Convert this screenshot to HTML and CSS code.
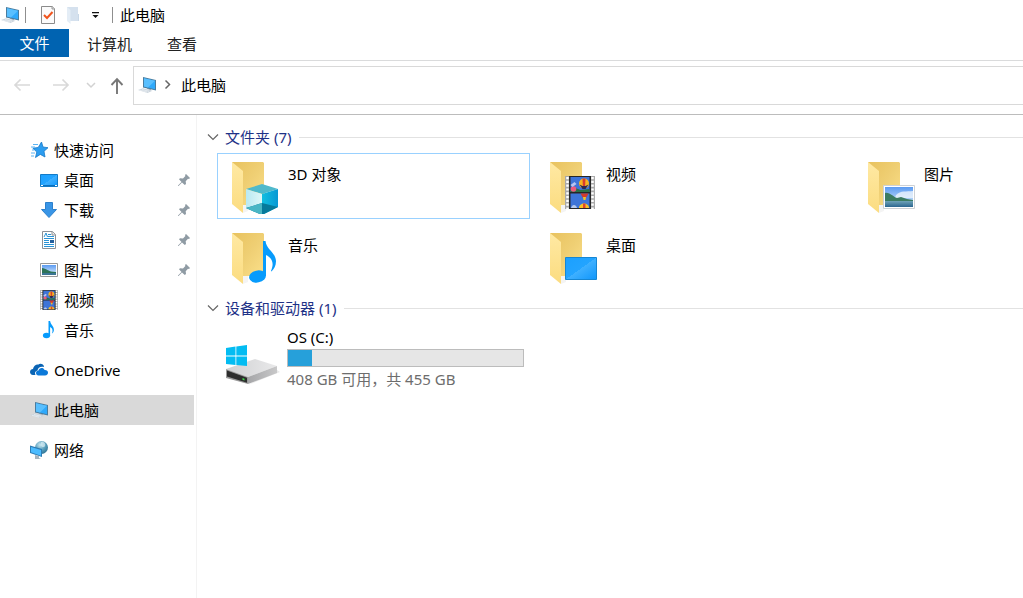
FILE: index.html
```html
<!DOCTYPE html>
<html lang="zh-CN">
<head>
<meta charset="utf-8">
<meta name="viewport" content="width=device-width, initial-scale=1">
<title>此电脑</title>
<link rel="stylesheet" href="styles.css">
</head>
<body>
<svg class="defs" aria-hidden="true">
  <defs>
    <linearGradient id="g-back" x1="0" y1="0" x2="1" y2="1"><stop offset="0" stop-color="#e8c25e"/><stop offset=".5" stop-color="#efcf74"/><stop offset="1" stop-color="#fbe08a"/></linearGradient>
    <linearGradient id="g-flap" x1="0" y1="0" x2="0" y2="1"><stop offset="0" stop-color="#ffe9a3"/><stop offset="1" stop-color="#fbdc80"/></linearGradient>
    <linearGradient id="g-blue" x1="0" y1="0" x2="1" y2="1"><stop offset="0" stop-color="#1ba0ff"/><stop offset=".5" stop-color="#23a4ff"/><stop offset=".5" stop-color="#3fb0ff"/><stop offset="1" stop-color="#0f96fb"/></linearGradient>
    <linearGradient id="g-sky" x1="0" y1="0" x2="0" y2="1"><stop offset="0" stop-color="#5b9bf2"/><stop offset="1" stop-color="#e6f3fd"/></linearGradient>
    <linearGradient id="g-sea" x1="0" y1="0" x2="0" y2="1"><stop offset="0" stop-color="#6fa3b8"/><stop offset="1" stop-color="#2b6690"/></linearGradient>
    <linearGradient id="g-cl"><stop offset="0" stop-color="#b9e9f2"/><stop offset="1" stop-color="#dff7f8"/></linearGradient>
    <linearGradient id="g-cr"><stop offset="0" stop-color="#12bfe0"/><stop offset="1" stop-color="#0798d4"/></linearGradient>
    <linearGradient id="g-top"><stop offset="0" stop-color="#cfd0d2"/><stop offset="1" stop-color="#e9e9ea"/></linearGradient>
    <linearGradient id="g-side"><stop offset="0" stop-color="#a5a6a8"/><stop offset="1" stop-color="#c8c8c9"/></linearGradient>
    <radialGradient id="g-globe" cx=".4" cy=".3" r=".8"><stop offset="0" stop-color="#c9e7f0"/><stop offset=".5" stop-color="#5ba0bd"/><stop offset="1" stop-color="#246a8c"/></radialGradient>
    <symbol id="i-folder" viewBox="0 0 56 56">
      <path d="M18 55l5-2v-6h-5z" fill="#f4f4f4"/>
      <path d="M7 4h31l1 1v42H18z" fill="url(#g-back)"/>
      <path d="M7 4l11 9v42L7 46z" fill="url(#g-flap)"/>
    </symbol>
    <symbol id="i-pc" viewBox="0 0 20 20">
      <path d="M10 12l4 1.500v2L10 14z" fill="#a9b6c0"/>
      <path d="M6 2l13 3v10.500L6 12.500z" fill="#4a7c9e"/>
      <path d="M7 3.200l11 2.600v8.400L7 11.500z" fill="#2fa9fb"/>
      <path d="M7 3.200l11 2.600-7 6.700-4-1z" fill="#59bffe"/>
      <path d="M1 15l5-1.800 9.500 2.500L10.500 18z" fill="#ccd5dd"/>
      <path d="M3 15.300l7 1.800M5 14.500l7 1.800" stroke="#f4f7fa" stroke-width=".6"/>
    </symbol>
    <symbol id="i-film" viewBox="0 0 30 33">
      <path d="M0 0h30v33H0z" fill="#a9a9a9"/>
      <path d="M4 0h22v33H4z" fill="#262626"/>
      <path d="M2.500 1v32M27.500 1v32" stroke="#fff" stroke-width="2.500" stroke-dasharray="2.200 1.600"/>
      <path d="M5.500 1h19v15h-19zM5.500 17.500h19V32h-19z" fill="#3e74d8"/>
      <path d="M5.500 13l5-1 5 2 9-1v3h-19z" fill="#2b7045"/>
      <circle cx="8.500" cy="13" r="2.800" fill="#ec5a7c"/><path d="M5.500 9l4-3 2 2-4 3z" fill="#b6c5f2"/>
      <ellipse cx="19" cy="7.500" rx="5" ry="5" fill="#f7b321"/><path d="M17.500 2.500h3l-.5 10h-2z" fill="#d83e2e"/><path d="M14.500 8.500l3 1.500h3l3-1.500-3 4.500h-3z" fill="#2d2952"/>
      <path d="M15.500 17.500h8l-2.500 4.500h-3z" fill="#d33b2c"/><path d="M18 21h3l-.5 3h-2z" fill="#f3c02b"/>
      <path d="M14 32c0-6 10-6 10 0z" fill="#f9c123"/><path d="M18 27.500h2.500V32H18z" fill="#de4431"/>
      <path d="M6 32c1-4 5-4 6 0z" fill="#b7c9ec"/>
    </symbol>
    <symbol id="i-photo" viewBox="0 0 32 24">
      <path d="M.5.5h31v23H.5z" fill="#fff" stroke="#cdd1d5"/>
      <path d="M2 2h28v20H2z" fill="url(#g-sky)"/>
      <path d="M13 10c5-5 10-3 17-4v7H12z" fill="#f3f8fc" opacity=".75"/>
      <path d="M2 8c5-1 8 4 12 5l4-1 6 2 6 1v2H2z" fill="#3b7c62"/>
      <path d="M2 16h28v6H2z" fill="url(#g-sea)"/>
    </symbol>
    <symbol id="i-pin" viewBox="0 0 14 14">
      <path d="M9 1l4 4-1 1-1-.3-2.300 2.500.3 2.800-1.200 1L5 9.500 1.500 13H1v-.5L4.500 9 2 6.300l1-1.100 3 .2L8.400 3 8 2z" fill="#8f9ba4"/>
    </symbol>
    <symbol id="i-down" viewBox="0 0 12 8"><path d="M1 1.500l5 5 5-5" fill="none" stroke="currentColor" stroke-width="1.200"/></symbol>
  </defs>
</svg>

<header>
  <div class="titlebar">
    <svg class="icon20" viewBox="0 0 20 20"><use href="#i-pc"/></svg>
    <span class="sep"></span>
    <button class="quick quick-check" aria-label="属性"><svg width="16" height="20" viewBox="0 0 16 20"><path d="M1.500 1.500h11l2 2v15h-13z" fill="#fbfbfb" stroke="#8b8b8b"/><path d="M12 1v3h3" fill="#ddd" stroke="#999"/><path d="M4 10l3 3 5.500-6" fill="none" stroke="#f0541e" stroke-width="2"/></svg></button>
    <button class="quick quick-folder" aria-label="新建文件夹"><svg width="14" height="20" viewBox="0 0 14 20"><path d="M1 2h11v14H4z" fill="#d5e1ee"/><path d="M12 9h1v7h-1z" fill="#c9d8e8"/><path d="M1 2l3.500 3v14L1 16z" fill="#e4edf6"/></svg></button>
    <button class="quick quick-menu" aria-label="自定义快速访问工具栏"><svg width="8" height="8" viewBox="0 0 8 8"><path d="M0 1h7v1.300H0zM.5 4h6l-3 3z" fill="#111"/></svg></button>
    <span class="sep"></span>
    <h1 class="title">此电脑</h1>
  </div>
  <div class="tabs">
    <button class="tab tab-file">文件</button>
    <button class="tab">计算机</button>
    <button class="tab">查看</button>
  </div>
  <div class="navbar">
    <button class="nav" aria-label="后退"><svg width="18" height="16" viewBox="0 0 18 16"><path d="M17 8H2M7.500 2.500L2 8l5.500 5.500" fill="none" stroke="#d9d9d9" stroke-width="1.700"/></svg></button>
    <button class="nav" aria-label="前进"><svg width="18" height="16" viewBox="0 0 18 16"><path d="M1 8h15M10.500 2.500L16 8l-5.500 5.500" fill="none" stroke="#d9d9d9" stroke-width="1.700"/></svg></button>
    <button class="nav nav-recent" aria-label="最近浏览的位置"><svg width="10" height="8" viewBox="0 0 10 8"><path d="M1 2l4 4 4-4" fill="none" stroke="#d2d2d2" stroke-width="1.500"/></svg></button>
    <button class="nav nav-up" aria-label="上移"><svg width="14" height="18" viewBox="0 0 14 18"><path d="M7 18V3M1.500 9L7 3.200 12.500 9" fill="none" stroke="#777" stroke-width="1.900"/></svg></button>
    <div class="address">
      <svg class="icon20" viewBox="0 0 20 20"><use href="#i-pc"/></svg>
      <svg class="crumb-arrow" width="8" height="12" viewBox="0 0 8 12"><path d="M1.500 1.500l4 4-4 4" fill="none" stroke="#666" stroke-width="1.500"/></svg>
      <button class="crumb">此电脑</button>
    </div>
  </div>
</header>

<div class="body">
  <nav class="sidebar">
    <a class="item" href="#quick"><svg class="icon20" viewBox="0 0 20 20"><path d="M12.500 2l1.500 5 5 .7-4 3.600 1 5.700-4.700-2.600L6.500 17.500l1.300-5.500-4-3.800 5.400-.7z" fill="#2c9df0" stroke="#1679c8" stroke-width=".8"/><path d="M4 4.500h5M2 7h4M3 10h2M2 13h4M2 16h3" stroke="#5ab4f4" stroke-width="1"/></svg>快速访问</a>
    <a class="item sub" href="#desktop"><svg class="icon20" viewBox="0 0 20 20"><path d="M1.500 4.500h17v12h-17z" fill="url(#g-blue)" stroke="#147bc7"/><path d="M2 15.500h2M16 15.500h2" stroke="#fff"/><path d="M4 15.500h12" stroke="#0a70bd"/></svg>桌面<svg class="pin"><use href="#i-pin"/></svg></a>
    <a class="item sub" href="#downloads"><svg class="icon20" viewBox="0 0 20 20"><path d="M6.500 2.500h7v7h4L10 17.500 2.500 9.500h4z" fill="#3995e6" stroke="#2c80cc"/></svg>下载<svg class="pin"><use href="#i-pin"/></svg></a>
    <a class="item sub" href="#documents"><svg class="icon20" viewBox="0 0 20 20"><path d="M3.500 1.500h10l3 3v14h-13z" fill="#fff" stroke="#8c9196"/><path d="M13 1.500v3.500h3.500" fill="#eee" stroke="#8c9196"/><path d="M5 7l2-4 1.500 4M9 4.500h3M9 6.500h6M5 8.500h10M5 10.500h5M5 12.500h5M5 14.500h10M5 16.500h10" fill="none" stroke="#2a93d5"/><path d="M11 10h4v3h-4z" fill="#245f9c"/></svg>文档<svg class="pin"><use href="#i-pin"/></svg></a>
    <a class="item sub" href="#pictures"><svg class="icon20" viewBox="0 0 20 20"><path d="M1.500 3.500h17v13h-17z" fill="#fff" stroke="#999"/><path d="M3 5h14v10H3z" fill="url(#g-sky)"/><path d="M3 8c4 0 6 4 14 4v2H3z" fill="#2d7358"/><path d="M3 13h14v2H3z" fill="#3c7595"/></svg>图片<svg class="pin"><use href="#i-pin"/></svg></a>
    <a class="item sub" href="#videos"><svg class="icon20" viewBox="0 0 20 20"><use href="#i-film" x="1" y="0" width="18" height="20"/></svg>视频</a>
    <a class="item sub" href="#music"><svg class="icon20" viewBox="0 0 20 20"><ellipse cx="7.500" cy="15.500" rx="3.600" ry="2.700" fill="#079bfc"/><path d="M9.500 1h1.600c.5 4 4 5 3.800 9-.1 2-1 3-2 3.500 1.500-3.500.2-5.500-1.800-6.500v9H9.500z" fill="#079bfc"/></svg>音乐</a>
    <a class="item root" href="#onedrive"><svg class="icon20" viewBox="0 0 20 20"><path d="M1 12c0-2 1.500-3 3-3 .5-3 3-5 5.500-4.500C11 3 15 4 15 7c-4-1-6 1-6.500 3.500C6 11 5.500 13 6.500 15H4c-2 0-3-1.500-3-3z" fill="#0a64b4"/><path d="M7 13c0-1.500 1-2.500 2.500-2.500C10 7.500 14.500 7 15.500 10c2-.2 3.500.8 3.500 2.600 0 1.600-1 2.900-3 2.900H9.500C8 15.500 7 14.500 7 13z" fill="#0c79d9"/></svg>OneDrive</a>
    <a class="item root selected" href="#pc" aria-current="page"><svg class="icon20" viewBox="0 0 20 20"><use href="#i-pc"/></svg>此电脑</a>
    <a class="item root" href="#network"><svg class="icon20" viewBox="0 0 20 20"><circle cx="12.500" cy="7.500" r="6.500" fill="url(#g-globe)"/><path d="M12 2c3-1 5 2 4 4s-4 1-4-1z" fill="#d5edf3" opacity=".7"/><path d="M1 5.500l12 3.500v8L1 13z" fill="#2d7db5"/><path d="M2 7l10 3v5.700L2 12.300z" fill="#4cbcff"/><path d="M6 15l4 1v2l2 1H6z" fill="#a7b4bd"/></svg>网络</a>
  </nav>

  <main class="content">
    <section class="group">
      <h2 class="group-title"><button class="group-toggle" aria-expanded="true"><svg class="chevron"><use href="#i-down"/></svg>文件夹 (7)</button></h2>
      <div class="tiles">
        <a class="tile focused" href="#3d"><svg class="icon56" viewBox="0 0 56 56"><use href="#i-folder"/><path d="M21 31l16-5 16 5-16 5z" fill="#4fb9cb"/><path d="M21 31l16 5v21l-16-7z" fill="url(#g-cl)"/><path d="M37 36l16-5v18l-16 8z" fill="url(#g-cr)"/><path d="M21 50l16-5 16 4-16 8z" fill="#067a9b"/><path d="M21 50l16-5v12z" fill="#49b6c5"/></svg><span class="name">3D 对象</span></a>
        <a class="tile" href="#videos"><svg class="icon56" viewBox="0 0 56 56"><use href="#i-folder"/><use href="#i-film" x="22" y="18" width="30" height="33"/></svg><span class="name">视频</span></a>
        <a class="tile" href="#pictures"><svg class="icon56" viewBox="0 0 56 56"><use href="#i-folder"/><use href="#i-photo" x="22" y="27" width="32" height="24"/></svg><span class="name">图片</span></a>
        <a class="tile" href="#music"><svg class="icon56" viewBox="0 0 56 56"><use href="#i-folder"/><ellipse cx="32.500" cy="47.500" rx="8.500" ry="6" transform="rotate(-12 32.500 47.500)" fill="#079bfc"/><path d="M38 12h2.500c1 9 10 11 10.500 20 .1 5-2 8-4.500 10.500l-.5-.5c3.500-8 1-13-5-16v21h-3z" fill="#079bfc"/></svg><span class="name">音乐</span></a>
        <a class="tile" href="#desktop"><svg class="icon56" viewBox="0 0 56 56"><use href="#i-folder"/><path d="M22.500 28.500h31v22h-31z" fill="url(#g-blue)" stroke="#1686d3"/></svg><span class="name">桌面</span></a>
      </div>
    </section>
    <section class="group">
      <h2 class="group-title"><button class="group-toggle" aria-expanded="true"><svg class="chevron"><use href="#i-down"/></svg>设备和驱动器 (1)</button></h2>
      <div class="tiles">
        <a class="tile tile-drive" href="#c"><svg class="icon56" viewBox="0 0 56 56"><path d="M23 55l32-13-3-2z" fill="#e9e9e9"/><path d="M1 39l29-10 22 7-29 11z" fill="url(#g-top)"/><path d="M23 47l29-11v7L23 54z" fill="url(#g-side)"/><path d="M1 39l22 8v7L1 48z" fill="#9a9a9a"/><path d="M2 40.500l20 7.200v5L2 46.500z" fill="#2d2d2d"/><path d="M17.500 48l2 .7v1.800l-2-.7z" fill="#3ee04c"/><path d="M1 18l9.500-1.400v9H1zM11.300 16.500L22 15v10.600H11.300zM1 26.400h9.500v8.500L1 34zM11.300 26.400H22V36l-10.700-1z" fill="#03bcf2"/></svg>
          <span class="drive"><span id="c-name">OS (C:)</span><progress class="usage" value="47" max="455" aria-labelledby="c-name"></progress><span class="space">408 GB 可用，共 455 GB</span></span></a>
      </div>
    </section>
  </main>
</div>
</body>
</html>
```
FILE: styles.css
```css
* { box-sizing: border-box; }

body {
  margin: 0;
  min-height: 100vh;
  display: flex;
  flex-direction: column;
  background: #fff;
  color: #000;
  font: 15px/20px "Noto Sans", "Noto Sans CJK SC", sans-serif;
  overflow: hidden;
}

button {
  border: 0;
  padding: 0;
  background: none;
  color: inherit;
  font: inherit;
}

a { color: inherit; text-decoration: none; }
svg { display: block; flex: none; }
.defs { position: absolute; width: 0; height: 0; }
.icon20 { width: 20px; height: 20px; }
.icon56 { width: 56px; height: 56px; }

.titlebar { display: flex; align-items: center; height: 29px; }
.sep { width: 1px; height: 16px; margin: 0 7px 0 5px; background: #8f8f8f; }
.quick-check { margin-left: 7px; }
.quick-folder { margin-left: 10px; }
.quick-menu { margin: 0 7px 0 12px; }
.title { margin: 0; font-size: 15px; font-weight: 400; }

.tabs { display: flex; gap: 1px; height: 32px; border-bottom: 1px solid #dadbdc; color: #222; }
.tab { height: 29px; padding: 0 17px; }
.tab-file { width: 69px; height: 28px; background: #0063b1; color: #fff; }

.navbar { display: flex; align-items: center; height: 54px; padding: 5px 0 10px 13px; border-bottom: 1px solid #bcbcbc; }
.nav { margin-right: 21px; }
.nav-recent { margin: 0 14px 0 -5px; }
.nav-up { margin-right: 9px; }
.address { display: flex; flex: 1; align-items: center; height: 39px; padding-left: 3px; border: 1px solid #d9d9d9; border-right: 0; }
.crumb-arrow { margin: 0 9px 0 7px; }

.body { display: flex; flex: 1; }
.sidebar { flex: none; width: 197px; padding: 20px 2px 20px 0; border-right: 1px solid #f3f3f3; }
.item { display: flex; align-items: center; gap: 5px; height: 30px; padding: 0 3px 0 29px; }
.sub { padding-left: 39px; }
.root { margin-top: 10px; }
.selected { background: #d9d9d9; }
.pin { width: 14px; height: 14px; margin-left: auto; }

.content { flex: 1; min-width: 0; padding: 12px 0 0 10px; overflow: hidden; }
.group { margin-bottom: 8px; }
.group-title { display: flex; align-items: center; gap: 8px; margin: 0 0 6px; font-size: 15px; font-weight: 400; color: #1e3287; }
.group-title::after { content: ""; flex: 1; height: 1px; background: #e2e2e2; }
.group-toggle { display: flex; align-items: center; gap: 6px; }
.chevron { width: 12px; height: 8px; color: #666; }

.tiles { display: grid; grid-template-columns: repeat(3, 313px); gap: 5px; padding-left: 10px; }
.tile { display: flex; gap: 7px; min-height: 66px; padding: 4px 5px 4px 7px; border: 1px solid transparent; }
.focused { border-color: #99d1ff; }
.name { padding-top: 6px; }
.tile-drive { align-items: center; gap: 6px; padding-top: 0; padding-bottom: 0; }
.drive { display: flex; flex: 1; flex-direction: column; line-height: 24px; }
.usage { appearance: none; width: 100%; height: 18px; border: 1px solid #bcbcbc; background: #e6e6e6; }
.usage::-webkit-progress-bar { background: #e6e6e6; }
.usage::-webkit-progress-value { background: #26a0da; }
.space { color: #6d6d6d; }
```
